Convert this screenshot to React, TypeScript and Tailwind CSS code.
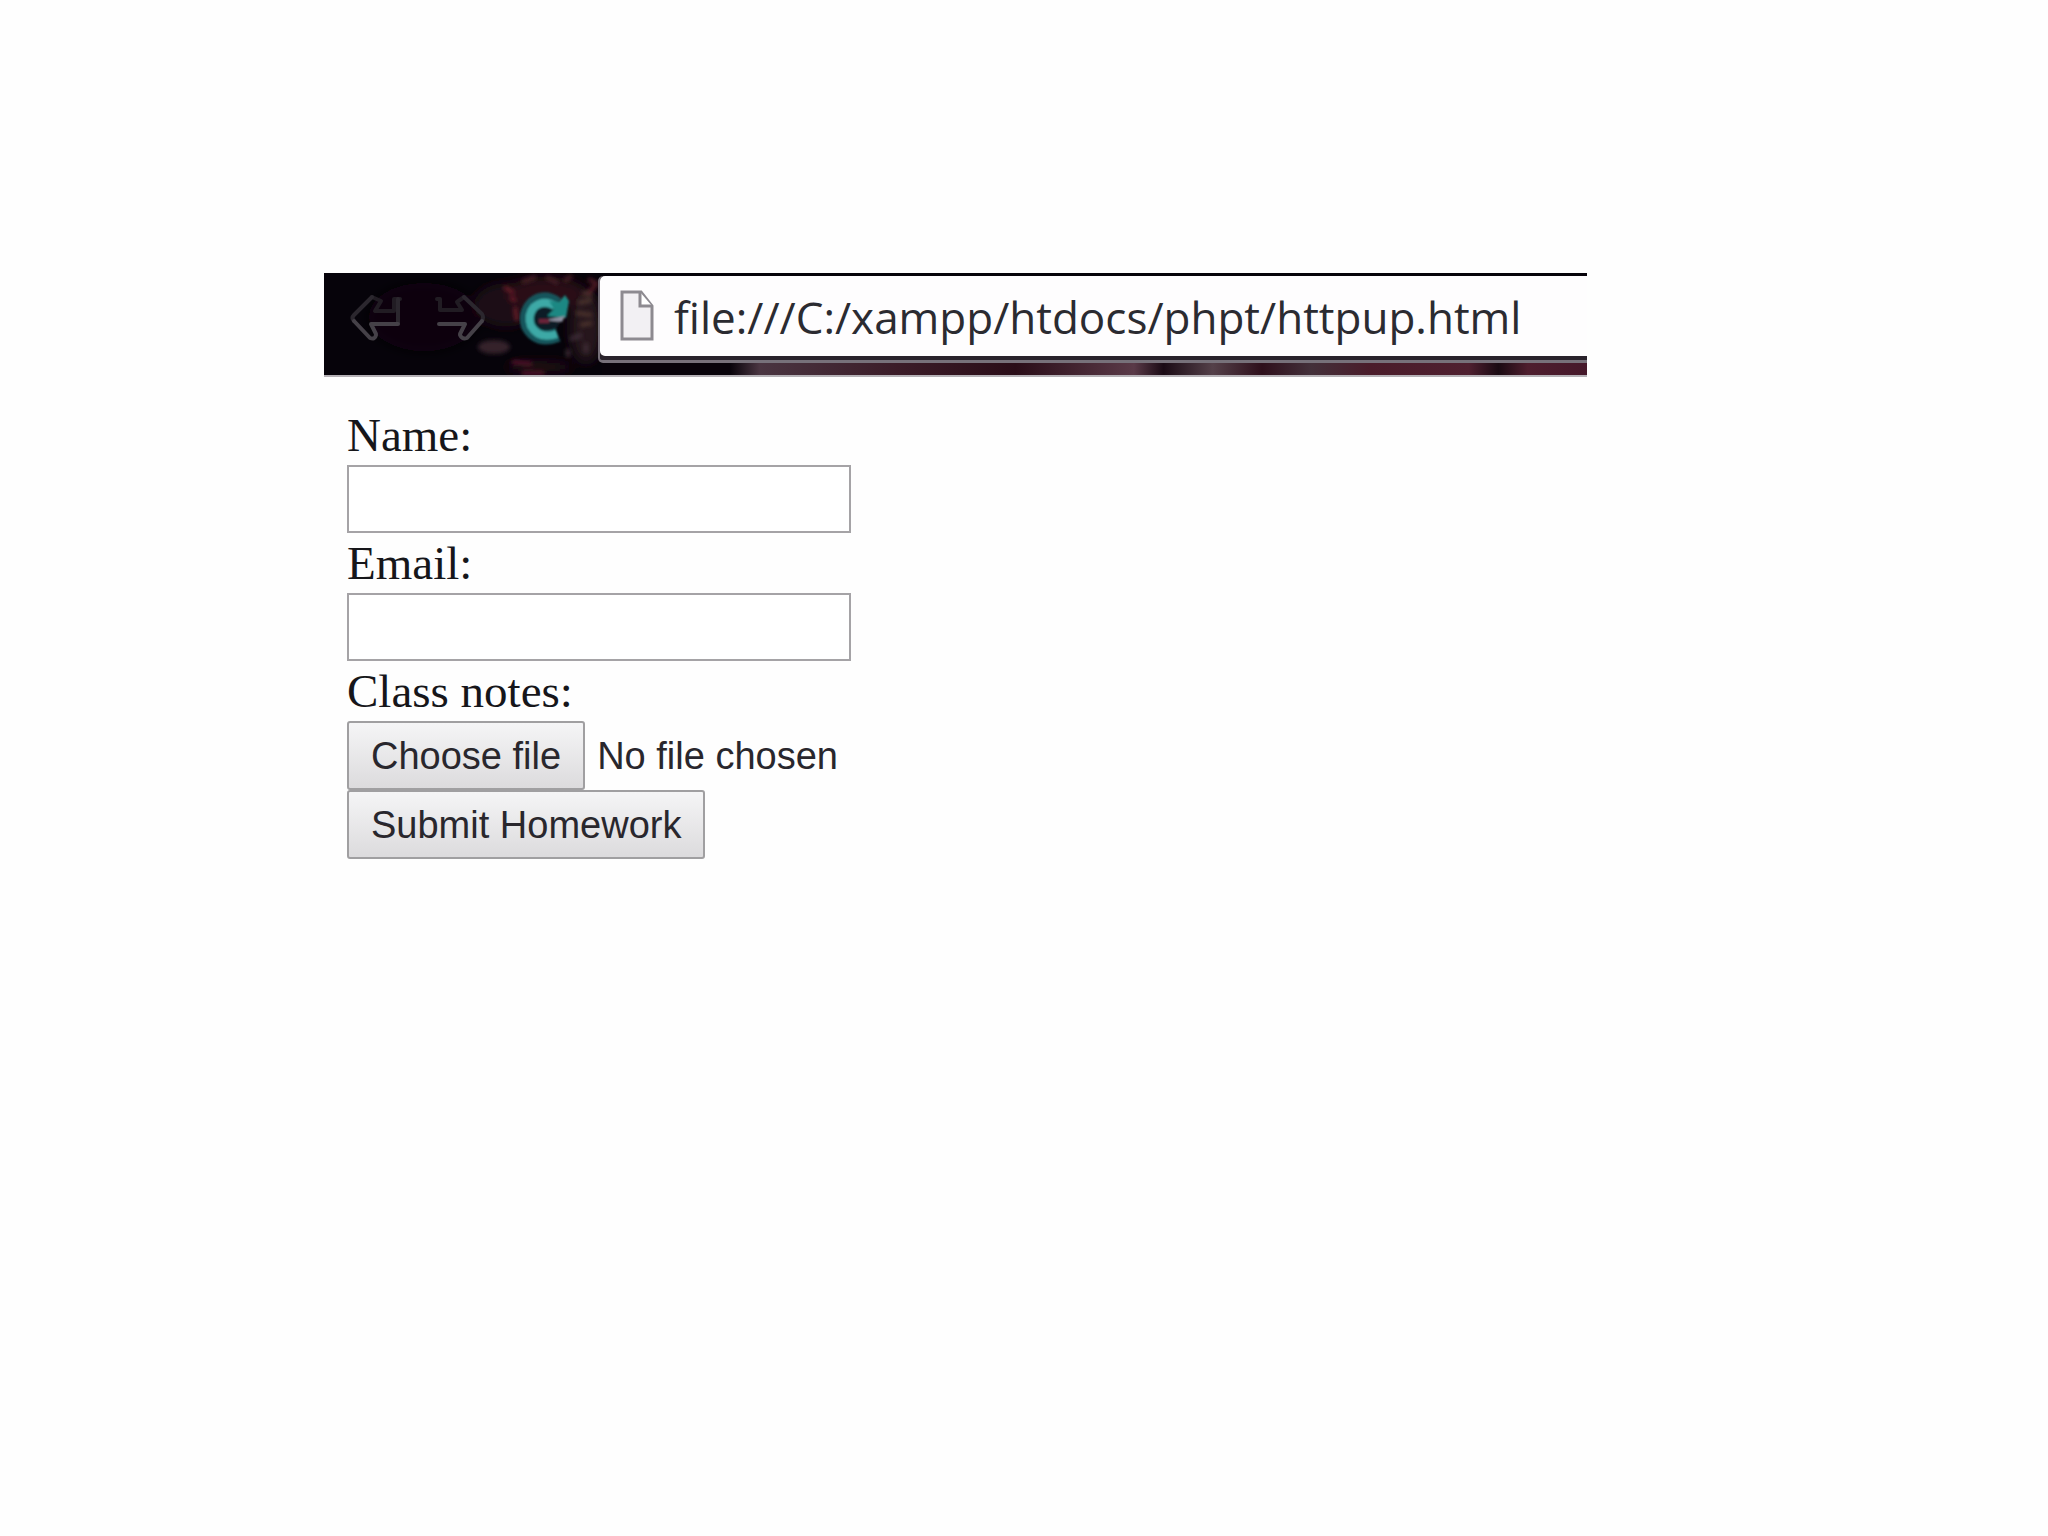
import { useRef, useState } from "react";

function ToolbarTexture() {
  return (
    <svg
      className="absolute inset-0 h-full w-full"
      viewBox="0 0 1263 102"
      preserveAspectRatio="none"
      aria-hidden="true"
    >
      <defs>
        <filter id="soft" x="-20%" y="-50%" width="140%" height="200%">
          <feGaussianBlur stdDeviation="6" />
        </filter>
        <filter id="fine" x="-20%" y="-50%" width="140%" height="200%">
          <feGaussianBlur stdDeviation="2" />
        </filter>
        <linearGradient id="strip" x1="0" x2="1" y1="0" y2="0">
          <stop offset="0" stopColor="#08030a" />
          <stop offset="0.13" stopColor="#08030a" />
          <stop offset="0.16" stopColor="#4a3541" />
          <stop offset="0.3" stopColor="#3b1c28" />
          <stop offset="0.42" stopColor="#2a0d18" />
          <stop offset="0.54" stopColor="#5a3a48" />
          <stop offset="0.57" stopColor="#1a0a14" />
          <stop offset="0.62" stopColor="#544049" />
          <stop offset="0.67" stopColor="#2e0f1b" />
          <stop offset="0.72" stopColor="#43303a" />
          <stop offset="0.78" stopColor="#4a1c2a" />
          <stop offset="0.88" stopColor="#4f2030" />
          <stop offset="0.91" stopColor="#1a0a12" />
          <stop offset="0.94" stopColor="#4e1e2e" />
          <stop offset="1" stopColor="#45182a" />
        </linearGradient>
      </defs>
      <rect x="278" y="88" width="985" height="14" fill="url(#strip)" />
      <g filter="url(#soft)">
        <ellipse cx="100" cy="44" rx="55" ry="34" fill="#10060d" />
        <ellipse cx="182" cy="32" rx="32" ry="22" fill="#1c0912" />
        <ellipse cx="222" cy="20" rx="40" ry="16" fill="#2a0f18" />
        <ellipse cx="262" cy="54" rx="16" ry="36" fill="#26121a" />
        <ellipse cx="215" cy="94" rx="34" ry="6" fill="#240a13" />
      </g>
      <g filter="url(#fine)" fill="none" strokeWidth="4">
        <ellipse cx="170" cy="74" rx="16" ry="7" fill="#35222b" />
        <path d="M180 14l10 6M186 24l6 4M191 34l2 14" stroke="#6a1c28" />
        <path d="M198 9l14-5M222 4l12 6M240 8l8-5" stroke="#4a2028" />
        <path d="M254 30l14-3M252 40l16 2M256 52l12-2M258 20l10 2" stroke="#4e342f" />
        <path d="M264 6l10 5M272 12l-8 8" stroke="#551a28" />
        <path d="M188 89l20 2M198 100h22" stroke="#55182a" />
        <path d="M246 66l12-4M244 76v8M262 70v10" stroke="#3f2d38" />
      </g>
    </svg>
  );
}

function BackIcon() {
  return (
    <svg className="h-[50px] w-[52px]" viewBox="0 0 52 50" fill="none" strokeLinejoin="round" strokeLinecap="round">
      <path d="M22 4L31 8L25 18H44V6H50" stroke="#211c23" strokeWidth="4" />
      <path d="M22 4L4 22Q1 25 4 28M48 6V30" stroke="#2b272e" strokeWidth="4" />
      <path d="M48 31H21L26 41M4 28L20 45Q25 47 26 42" stroke="#454148" strokeWidth="4" />
    </svg>
  );
}

function ForwardIcon() {
  return (
    <svg className="h-[50px] w-[52px]" viewBox="0 0 52 50" fill="none" strokeLinejoin="round" strokeLinecap="round">
      <path d="M3 6H6V17H28L23 9L30 4" stroke="#211c23" strokeWidth="4" />
      <path d="M30 4L48 21Q50 24 48 28" stroke="#2b272e" strokeWidth="4" />
      <path d="M5 31H31L26 41M48 28L33 45Q28 47 26 42" stroke="#454148" strokeWidth="4" />
    </svg>
  );
}

function ReloadIcon() {
  return (
    <svg className="h-[58px] w-[54px]" viewBox="0 0 54 58" fill="none">
      <defs>
        <filter id="glow" x="-20%" y="-20%" width="140%" height="140%">
          <feGaussianBlur stdDeviation="1" />
        </filter>
      </defs>
      <g filter="url(#glow)">
        <circle cx="24" cy="29" r="17" fill="#0b1a25" />
        <path d="M38 15Q25 6 14 15Q5 25 9 37Q18 54 39 46" stroke="#17555c" strokeWidth="14" />
        <path d="M36 17Q25 10 15 18Q8 26 12 37Q20 51 38 45" stroke="#3da9a6" strokeWidth="8" />
        <path d="M46 6L50 12L47 29L28 27L35 20L30 12L40 13Z" fill="#1f8883" />
        <path d="M26 31L46 27L43 33Z" fill="#8d90a0" />
        <path d="M20 32H30" stroke="#6a2438" strokeWidth="4" />
      </g>
    </svg>
  );
}

function PageIcon() {
  return (
    <svg className="h-[52px] w-[34px] shrink-0" viewBox="0 0 34 52" aria-hidden="true">
      <path d="M2 2H21L32 16V49H2Z" fill="#f2f0f3" stroke="#8d8a90" strokeWidth="3" />
      <path d="M20 2V16H32" fill="#fff" stroke="#8d8a90" strokeWidth="3" />
    </svg>
  );
}

const labelClass = "block h-[60px] pt-[2px] font-['Liberation_Serif',serif] text-[47px] leading-[56px] text-[#16161a]";
const inputClass = "block h-[68px] w-[504px] max-w-full border-2 border-[#a5a3a6] bg-white px-2 text-[38px] outline-none";
const buttonClass =
  "h-[69px] rounded-[3px] border-2 border-[#a09fa1] bg-linear-to-b from-[#f5f5f6] to-[#dcdbdd] px-[22px] whitespace-nowrap";

export default function App() {
  const fileInput = useRef<HTMLInputElement>(null);
  const [fileName, setFileName] = useState("No file chosen");
  const [url, setUrl] = useState("file:///C:/xampp/htdocs/phpt/httpup.html");

  return (
    <div className="min-h-screen bg-[#fefefe] pt-[273px] pr-[461px] pl-[324px]">
      <header className="relative border-b-2 border-[#b5b1b6] bg-[#06030a]">
        <ToolbarTexture />
        <nav className="relative flex items-start pt-[3px] pb-[12px]" aria-label="Browser">
          <div className="flex w-[274px] shrink-0 items-center pt-[13px] pl-[26px]">
            <button type="button" aria-label="Back"><BackIcon /></button>
            <button type="button" aria-label="Forward" className="ml-[32px]"><ForwardIcon /></button>
            <button type="button" aria-label="Reload" className="ml-[33px]"><ReloadIcon /></button>
          </div>
          <div className="min-w-0 flex-1 rounded-l-[5px] border-b-3 border-l-2 border-[#77717a] bg-[#29222b] pb-[4px]">
            <div className="flex h-[80px] items-center rounded-l-[5px] bg-[#fefdfe] pl-[20px]">
              <PageIcon />
              <input
                type="text"
                aria-label="Address"
                value={url}
                onChange={(e) => setUrl(e.target.value)}
                className="ml-[20px] h-[76px] min-w-0 flex-1 bg-transparent pt-[2px] font-['Open_Sans',sans-serif] text-[44px] text-[#2b2b31] outline-none"
              />
            </div>
          </div>
        </nav>
      </header>

      <form className="px-[23px] pt-[28px]" onSubmit={(e) => e.preventDefault()}>
        <label htmlFor="name" className={labelClass}>Name:</label>
        <input id="name" type="text" className={inputClass} />
        <label htmlFor="email" className={labelClass}>Email:</label>
        <input id="email" type="email" className={inputClass} />
        <label htmlFor="notes" className={labelClass}>Class notes:</label>
        <div className="font-['Liberation_Sans',sans-serif] text-[38px] leading-[60px] text-[#29272d]">
          <div className="flex items-center">
            <button type="button" className={buttonClass} onClick={() => fileInput.current?.click()}>
              Choose file
            </button>
            <span className="ml-[12px] whitespace-nowrap">{fileName}</span>
            <input
              ref={fileInput}
              id="notes"
              type="file"
              className="hidden"
              onChange={(e) => setFileName(e.target.files?.[0]?.name ?? "No file chosen")}
            />
          </div>
          <button type="submit" className={buttonClass}>Submit Homework</button>
        </div>
      </form>
    </div>
  );
}
